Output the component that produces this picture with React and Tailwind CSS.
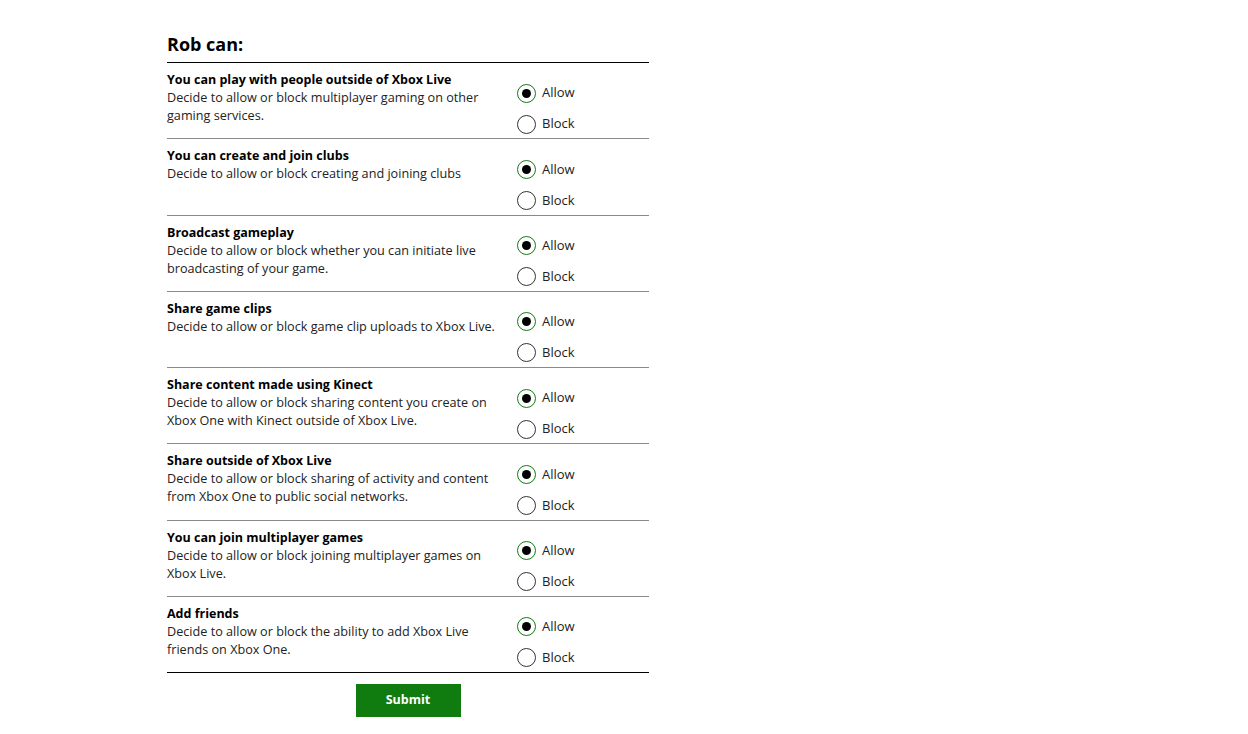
import React, { useState } from "react";

const settings = [
  { title: "You can play with people outside of Xbox Live", desc: "Decide to allow or block multiplayer gaming on other gaming services." },
  { title: "You can create and join clubs", desc: "Decide to allow or block creating and joining clubs" },
  { title: "Broadcast gameplay", desc: "Decide to allow or block whether you can initiate live broadcasting of your game." },
  { title: "Share game clips", desc: "Decide to allow or block game clip uploads to Xbox Live." },
  { title: "Share content made using Kinect", desc: "Decide to allow or block sharing content you create on Xbox One with Kinect outside of Xbox Live." },
  { title: "Share outside of Xbox Live", desc: "Decide to allow or block sharing of activity and content from Xbox One to public social networks." },
  { title: "You can join multiplayer games", desc: "Decide to allow or block joining multiplayer games on Xbox Live." },
  { title: "Add friends", desc: "Decide to allow or block the ability to add Xbox Live friends on Xbox One." },
];

function Radio({ checked, label, onClick }) {
  return (
    <button onClick={onClick} className="flex items-center gap-[6px] h-[20px] text-left">
      <span
        className={`w-[19px] h-[19px] rounded-full border-[1.5px] flex items-center justify-center ${
          checked ? "border-[#107c10]" : "border-[#333]"
        }`}
      >
        {checked && <span className="w-[9px] h-[9px] rounded-full bg-black" />}
      </span>
      <span className="text-[13px] text-[#222]">{label}</span>
    </button>
  );
}

export default function App() {
  const [values, setValues] = useState(settings.map(() => "allow"));

  const setValue = (i, v) => {
    setValues((prev) => prev.map((x, j) => (j === i ? v : x)));
  };

  return (
    <div className="min-h-screen bg-white" style={{ fontFamily: '"Open Sans", "Noto Sans", sans-serif' }}>
      <div className="ml-[167px] w-[482px] pt-[32px]">
        <h1 className="text-[18px] font-bold text-black leading-[24px] pb-[6px]">Rob can:</h1>
        <div className="border-t border-black">
          {settings.map((s, i) => (
            <div
              key={s.title}
              className={`flex h-[76.25px] ${i === settings.length - 1 ? "border-b border-black" : "border-b border-[#8a8a8a]"}`}
            >
              <div className="w-[350px] pt-[8px] pr-[8px]">
                <div className="text-[12.5px] font-bold text-black leading-[17px]">{s.title}</div>
                <div className="text-[12.65px] text-[#222] leading-[18px]">{s.desc}</div>
              </div>
              <div className="flex flex-col pt-[20px] gap-[11px]">
                <Radio checked={values[i] === "allow"} label="Allow" onClick={() => setValue(i, "allow")} />
                <Radio checked={values[i] === "block"} label="Block" onClick={() => setValue(i, "block")} />
              </div>
            </div>
          ))}
        </div>
        <div className="flex justify-center pt-[11px]">
          <button className="w-[105px] h-[33px] bg-[#107c10] text-white text-[12.5px] font-bold">Submit</button>
        </div>
      </div>
    </div>
  );
}
